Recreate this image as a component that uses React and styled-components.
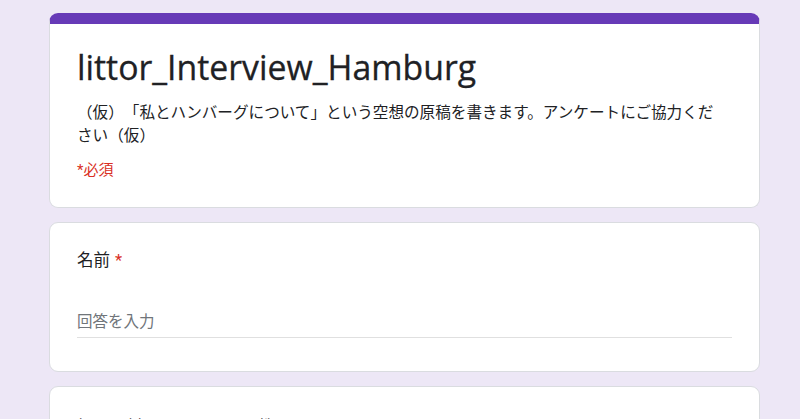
import React from "react";
import styled, { createGlobalStyle } from "styled-components";

const Global = createGlobalStyle`
  html, body { margin: 0; padding: 0; background: #ede7f6; }
  body {
    font-family: Roboto, "Noto Sans CJK JP", sans-serif;
    text-spacing-trim: space-all;
  }
`;

const Page = styled.div`
  width: 800px;
  height: 419px;
  overflow: hidden;
  background: #ede7f6;
  box-sizing: border-box;
  padding: 13px 40px 0 49px;
`;

const Column = styled.div`
  width: 711px;
  display: flex;
  flex-direction: column;
  gap: 14px;
`;

const Card = styled.section`
  background: #fff;
  border: 1px solid #dadce0;
  border-radius: 9px;
  box-sizing: border-box;
  padding: ${(p) => p.$pad || "24px 27px"};
  height: ${(p) => p.$h || "auto"};
  overflow: hidden;
  ${(p) => p.$accent && `
    border-top: 11px solid #673ab7;
  `}
`;

const Title = styled.h1`
  margin: 0;
  font-family: "Open Sans", sans-serif;
  font-weight: 400;
  font-size: 33.8px;
  line-height: 46px;
  color: #202124;
  -webkit-text-stroke: 0.3px #202124;
`;

const Desc = styled.p`
  margin: 10px 0 0;
  font-family: "Noto Sans CJK JP", sans-serif;
  font-size: 15.6px;
  line-height: 23px;
  color: #202124;
  width: 648px;
  text-spacing-trim: space-all;
`;

const Required = styled.div`
  margin-top: 14px;
  font-family: Roboto, "Noto Sans CJK JP", sans-serif;
  font-size: 15px;
  line-height: 20px;
  color: #d93025;
`;

const Question = styled.div`
  font-family: Roboto, "Noto Sans CJK JP", sans-serif;
  font-size: 16.5px;
  line-height: 24px;
  color: #202124;
`;

const Star = styled.span`
  color: #d93025;
  margin-left: 5px;
`;

const Answer = styled.div`
  margin-top: 38px;
  border-bottom: 1px solid #e0e0e0;
  padding-bottom: 4px;
  font-family: Roboto, "Noto Sans CJK JP", sans-serif;
  font-size: 15.5px;
  line-height: 22px;
  color: #70757a;
`;

export default function App() {
  return (
    <>
      <Global />
      <Page>
        <Column>
          <Card $accent $pad="20px 27px 26px" $h="195px">
            <Title>littor_Interview_Hamburg</Title>
            <Desc>
              （仮）「私とハンバーグについて」という空想の原稿を書きます。アンケートにご協力ください（仮）
            </Desc>
            <Required>*必須</Required>
          </Card>
          <Card $pad="26px 27px 0" $h="150px">
            <Question>
              名前<Star>*</Star>
            </Question>
            <Answer>回答を入力</Answer>
          </Card>
          <Card $pad="28.5px 27px 0" $h="80px">
            <Question>好きな料理・ジャンルを教えて下さい</Question>
          </Card>
        </Column>
      </Page>
    </>
  );
}
